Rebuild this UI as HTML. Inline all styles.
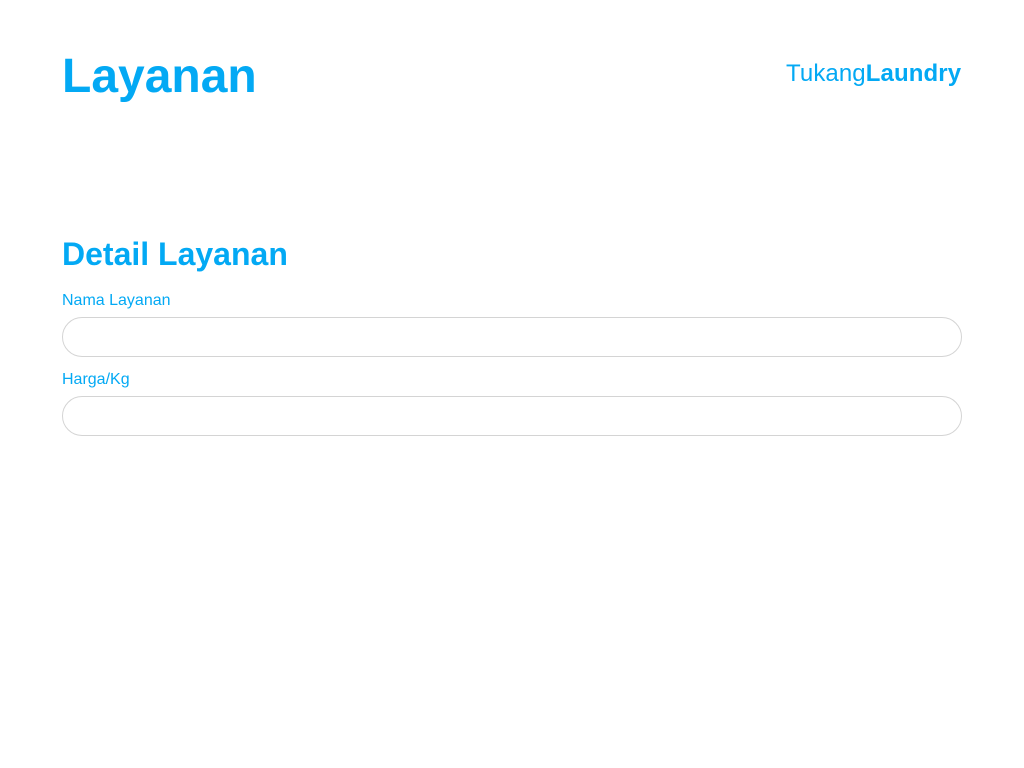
<!DOCTYPE html>
<html><head><meta charset="utf-8"><style>
body{margin:0;width:1024px;height:768px;background:#fff;font-family:"Liberation Sans",sans-serif;color:#03A9F4;position:relative;overflow:hidden}
.a{position:absolute;white-space:nowrap;line-height:1}
.in{position:absolute;left:62px;width:898px;height:38px;border:1px solid #d4d4d4;border-radius:20px}
</style></head><body>
<div class="a" style="left:62px;top:53px;font-size:48px;font-weight:bold">Layanan</div>
<div class="a" style="left:786px;top:62px;font-size:24px;letter-spacing:0.1px">Tukang<b>Laundry</b></div>
<div class="a" style="left:62px;top:238px;font-size:32px;font-weight:bold">Detail Layanan</div>
<div class="a" style="left:62px;top:293px;font-size:16px">Nama Layanan</div>
<div class="in" style="top:317px"></div>
<div class="a" style="left:62px;top:372px;font-size:16px">Harga/Kg</div>
<div class="in" style="top:396px"></div>
</body></html>
